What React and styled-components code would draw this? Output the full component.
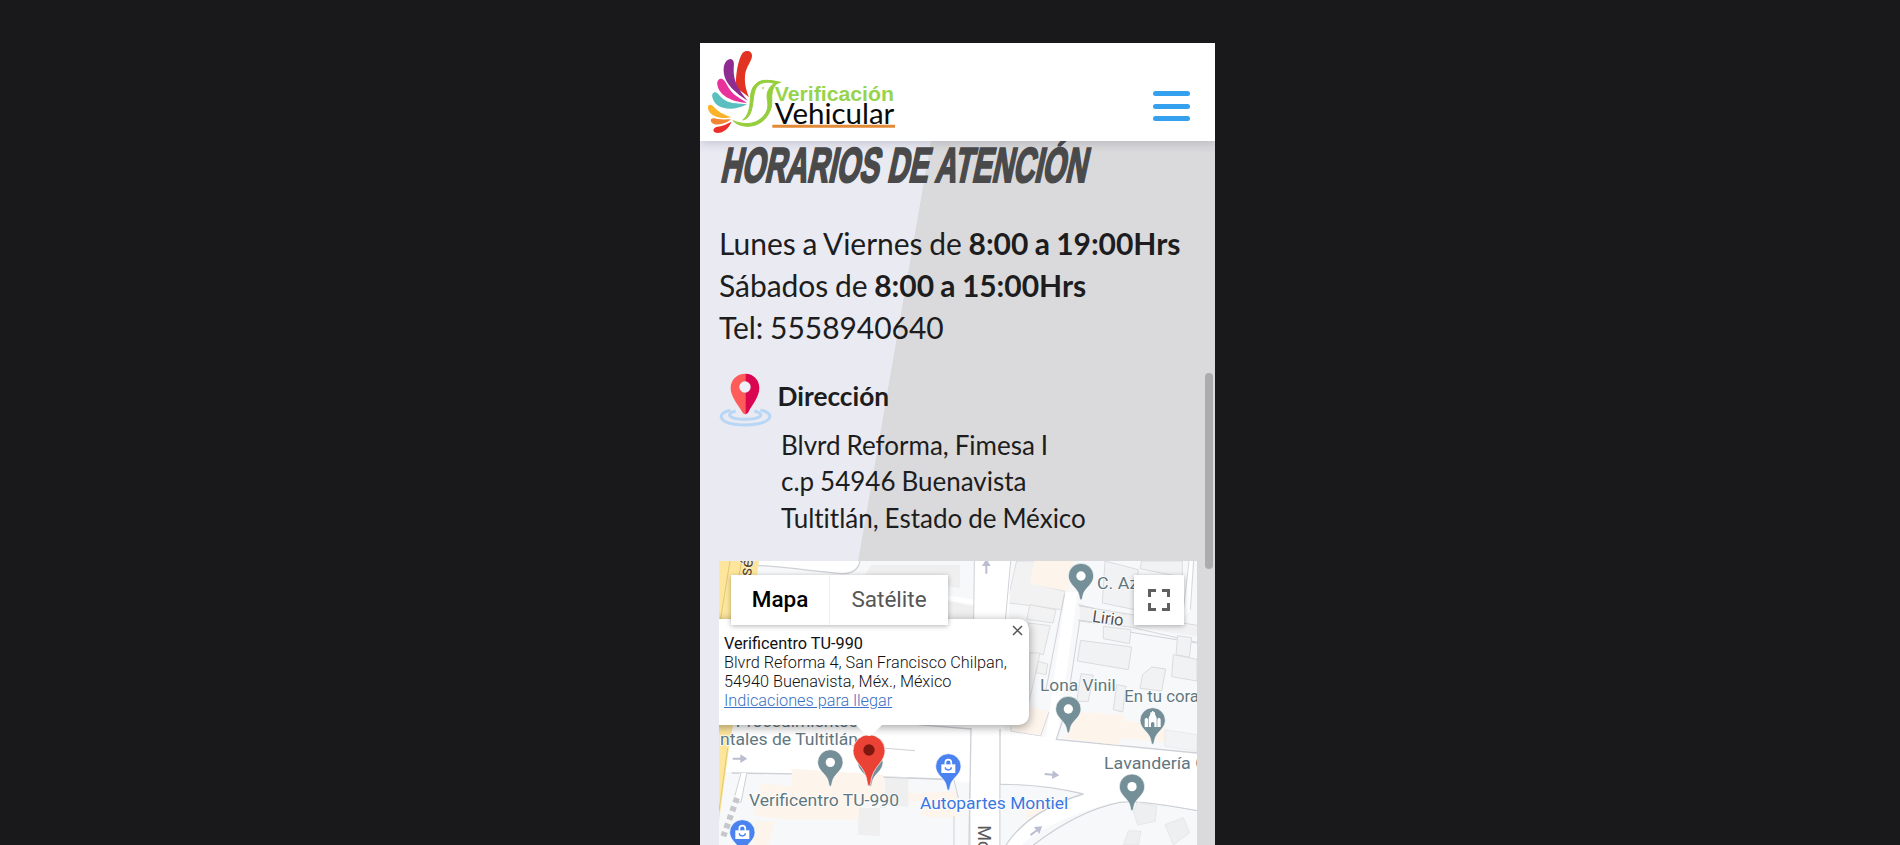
import React from "react";
import styled, { createGlobalStyle } from "styled-components";

const GlobalStyle = createGlobalStyle`
  * { box-sizing: border-box; }
  html, body { margin: 0; height: 845px; overflow: hidden; background: #19191b; }
  body { font-family: Lato, "Liberation Sans", sans-serif; color: #1d1d20; }
`;

const Stage = styled.div`
  display: flex;
  justify-content: center;
  height: 845px;
  padding: 43px 0 0 15px;
  overflow: hidden;
`;

const Phone = styled.div`
  display: flex;
  flex-direction: column;
  width: 515px;
  height: 802px;
  overflow: hidden;
`;

const Header = styled.header`
  display: flex;
  flex: none;
  justify-content: space-between;
  height: 98px;
  padding-right: 25px;
  background: #fff;
  box-shadow: 0 2px 10px rgba(40, 40, 70, 0.2);
  z-index: 3;
`;

const MenuButton = styled.button`
  display: flex;
  flex-direction: column;
  gap: 7.5px;
  width: 37px;
  margin-top: 48px;
  padding: 0;
  border: 0;
  background: none;
`;

const MenuBar = styled.span`
  height: 5px;
  border-radius: 2.5px;
  background: #35a0ee;
`;

const Content = styled.main`
  display: flex;
  flex: 1;
  min-height: 0;
  justify-content: space-between;
  padding-left: 19px;
  background: linear-gradient(99.84deg, #e9eaf2 calc(50% - 86.6px), #dadadc calc(50% - 86px));
`;

const Column = styled.div`
  width: 478px;
  flex: none;
`;

const Title = styled.h2`
  width: max-content;
  height: 50px;
  margin: 0 0 0 1px;
  font: 700 49px/50px "Liberation Sans Narrow", "Liberation Sans", sans-serif;
  color: #4a4a4b;
  white-space: nowrap;
  -webkit-text-stroke: 2.2px #4a4a4b;
  transform-origin: 0 41px;
  transform: translateY(-1.5px) skewX(-12deg) scaleX(${(p) => p.$squeeze});
`;

const Hours = styled.div`
  margin-top: 31px;
  font-size: 30px;
  line-height: 42px;
  letter-spacing: -0.04px;
  word-spacing: -0.9px;
  white-space: nowrap;
`;

const Strong = styled.strong`
  font-weight: 700;
`;

const Place = styled.div`
  display: flex;
  align-items: flex-start;
  gap: 5.5px;
  height: 54px;
  margin-top: 25.3px;
`;

const PlaceTitle = styled.h3`
  margin: 5px 0 0;
  font-size: 26.3px;
  line-height: 36px;
  font-weight: 700;
`;

const Address = styled.address`
  margin: -0.3px 0 0 62px;
  font-size: 26px;
  line-height: 36.4px;
  font-style: normal;
  font-variant-ligatures: none;
  word-spacing: -0.7px;
  white-space: nowrap;
`;

const MapBox = styled.section`
  position: relative;
  width: 478px;
  height: 284px;
  margin-top: 24.8px;
  overflow: hidden;
  font-family: Roboto, sans-serif;
`;

const MapSvg = styled.svg`
  display: block;
  width: 478px;
  height: 284px;
`;

const InfoWindow = styled.div`
  position: absolute;
  left: -30px;
  top: 58px;
  width: 340px;
  height: 106px;
  padding: 14.5px 0 0 35px;
  border-radius: 10px;
  background: #fff;
  box-shadow: 0 2px 9px 1px rgba(0, 0, 0, 0.32);
  font-size: 16.25px;
  line-height: 19px;
  font-weight: 300;
  color: #111;
  white-space: nowrap;
`;

const InfoTitle = styled.div`
  font-weight: 400;
`;

const InfoLink = styled.a`
  color: #3a6fc4;
  text-decoration: underline;
`;

const CloseIcon = styled.svg`
  position: absolute;
  right: 6px;
  top: 6px;
  width: 11px;
  height: 11px;
`;

const Tail = styled.svg`
  position: absolute;
  left: 134px;
  top: 163px;
  width: 32px;
  height: 13px;
`;

const TypeSwitch = styled.div`
  position: absolute;
  left: 12px;
  top: 13.5px;
  display: flex;
  gap: 1px;
  height: 50px;
  background: #eee;
  box-shadow: 0 1px 5px rgba(0, 0, 0, 0.3);
`;

const TypeButton = styled.button`
  width: ${(p) => p.$width}px;
  padding: 0 0 2px;
  border: 0;
  background: #fff;
  font: ${(p) => (p.$active ? 500 : 400)} 22.5px Roboto, sans-serif;
  color: ${(p) => (p.$active ? "#000" : "#565656")};
`;

const FullscreenButton = styled.button`
  position: absolute;
  right: 13px;
  top: 13.5px;
  display: grid;
  place-items: center;
  width: 50px;
  height: 50px;
  padding: 0;
  border: 0;
  background: #fff;
  box-shadow: 0 1px 5px rgba(0, 0, 0, 0.3);
`;

const ScrollThumb = styled.div`
  width: 8px;
  height: 196px;
  margin: 231.5px 2px 0 0;
  border-radius: 4px;
  background: #acacaf;
`;

function Logo() {
  return (
    <svg width="200" height="98" viewBox="30 24 600 294">
      <path fill="#e23222" d="M138 160C136 108 149 62 160 52C171 43 188 49 186 64C184 82 168 94 165 122C163 148 170 170 177 187C165 178 149 165 138 160Z" />
      <path fill="#8e2c91" d="M166 193C132 168 99 142 101 101C102 84 111 72 122 72C134 74 132 88 131 101C130 140 146 164 173 197Z" />
      <path fill="#e8319b" d="M171 204C136 201 88 187 82 149C80 136 89 128 98 133C108 139 111 153 121 166C134 184 154 192 171 204Z" />
      <path fill="#5bbfc0" d="M171 208C133 229 79 227 68 190C63 175 72 168 82 174C98 193 111 203 137 205Z" />
      <path fill="#fbb42a" d="M124 247C95 254 59 244 54 221C52 208 61 206 70 214C84 231 101 239 124 247Z" />
      <path fill="#f28532" d="M123 253C105 270 72 274 63 260C60 250 68 248 78 251C93 254 107 253 123 253Z" />
      <path fill="#ec3029" d="M124 260C118 282 91 300 74 292C66 285 72 277 83 275C100 273 113 266 124 260Z" />
      <path fill="#95ce3c" stroke="#95ce3c" strokeWidth="3" strokeLinejoin="round" d="M158 255C174 244 180 220 181 193C181 152 204 134 231 136C249 136 259 140 272 142C259 145 251 152 247 170C242 188 249 201 242 222C230 261 191 282 153 271C143 268 135 264 130 257C150 266 182 271 204 257C232 239 237 218 232 194C228 172 238 153 254 146C241 140 219 139 204 151C188 168 192 198 185 222C181 241 171 253 158 255Z" />
      <circle cx="219" cy="159" r="4" fill="#c5e494" />
      <text x="254" y="199" textLength="358" lengthAdjust="spacingAndGlyphs" fontFamily="Liberation Sans, sans-serif" fontWeight="700" fontSize="61" fill="#96d44e">Verificación</text>
      <text x="254" y="266" textLength="359" lengthAdjust="spacingAndGlyphs" fontFamily="Lato, sans-serif" fontWeight="400" fontSize="84" fill="#090909">Vehicular</text>
      <path fill="#e28a38" d="M247 269H615V278H247Z" />
    </svg>
  );
}

function PlaceIcon() {
  return (
    <svg width="53" height="54" viewBox="27 27 159 162">
      <g fill="none" stroke="#b8d6f5">
        <path strokeWidth="9" d="M62 139C17 147 22 181 104 183C190 181 198 148 151 138" />
        <path strokeWidth="9" d="M77 141C42 151 60 166 105 166C151 166 170 151 133 141" />
      </g>
      <path fill="#ff5b58" d="M106 29C80 29 62 48 62 72C62 100 87 125 97 145Q101 151 106 151Z" />
      <path fill="#db0650" d="M106 29C131 29 148 48 148 72C148 100 124 125 115 145Q111 151 106 151Z" />
      <circle cx="105" cy="69" r="17" fill="#eef0f8" />
    </svg>
  );
}

function Pin({ x, y, color = "#748f98", children }) {
  return (
    <g transform={`translate(${x} ${y})`}>
      <path fill={color} stroke="#fff" strokeWidth="2" d="M0 72C-5 72-4 60-9 49C-17 33-38 22-38 0A38 38 0 0 1 38 0C38 22 17 33 9 49C4 60 5 72 0 72Z" />
      {children || <circle r="14" fill="#fff" />}
    </g>
  );
}

function Bag() {
  return (
    <g>
      <path fill="#fff" d="M-21-6H21V20H-21Z" />
      <path fill="none" stroke="#fff" strokeWidth="5" d="M-9-5V-11A9 9 0 0 1 9-11V-5" />
      <path fill="none" stroke="#4a83f0" strokeWidth="4" d="M-9 3A9 8 0 0 0 9 3" />
    </g>
  );
}

function Label({ x, y, w, color = "#5f7780", children, ...rest }) {
  return (
    <text x={x} y={y} textLength={w} lengthAdjust="spacingAndGlyphs" fontSize="50" fill={color} stroke="#fff" strokeWidth="4" strokeLinejoin="round" paintOrder="stroke" {...rest}>
      {children}
    </text>
  );
}

const Arrow = ({ x, y, r = 0 }) => (
  <path transform={`translate(${x} ${y}) rotate(${r})`} fill="#bbbdd0" d="M-22-3H1V-13L22 0L1 13V3H-22Z" />
);

function StreetMap() {
  return (
    <MapSvg viewBox="12 9 1434 852" fontFamily="Roboto, sans-serif">
      <rect x="0" y="0" width="1470" height="870" fill="#f7f8fa" />
      <path fill="#fff" d="M120 0H445C430 35 410 48 380 46C300 40 220 28 125 24Z" />
      <path fill="none" stroke="#cfd1d6" strokeWidth="4" d="M125 22C220 28 300 40 370 46C410 50 430 35 435 9" />
      <path fill="#efeff0" d="M470 20H735V90L450 50ZM700 130L775 145V185H700Z" />
      <path fill="#fff" d="M698 112L780 125V140L698 126Z" />

      <g fill="#f2f2f3" stroke="#dddee1" strokeWidth="3">
        <path d="M905 9H968V80L1050 100L1040 155L876 134Z" />
        <path d="M945 140L1023 155L1014 195L935 184Z" />
        <path d="M940 195L1006 203L985 290L940 282Z" />
        <path d="M945 285H975L952 390L925 500H940Z" />
        <path d="M970 310L998 318L993 350L963 344Z" />
      </g>
      <path fill="#fdf4ec" d="M958 9H1078L1060 100L945 78ZM910 440L1002 460L980 531L886 520Z" />
      <path fill="none" stroke="#d6d8dd" strokeWidth="3" d="M888 505V520L977 534L1002 462" />

      <path fill="#fff" d="M780 9H888L866 560H768ZM1052 102H1088L1026 545H992Z" />
      <path fill="none" stroke="#d0d2d7" strokeWidth="3" d="M778 9L768 870M887 9L870 200M1048 110L992 400M1094 190L1062 400M1090 140L1140 152M1220 168L1270 180M1090 188L1140 195M1230 220L1446 255" />
      <path fill="#f1f1f3" d="M1095 147L1446 205V235L1095 185Z" />
      <path fill="none" stroke="#d5d7db" strokeWidth="3" d="M1092 144L1446 202M1090 186L1250 208L1446 253" />
      <g fill="#f1f2f3" stroke="#dadcdf" strokeWidth="3">
        <path d="M1170 9L1270 35L1260 155L1162 135Z" />
        <path d="M1280 9H1402V58L1275 32Z" />
        <path d="M1165 205L1248 215L1243 257L1165 242Z" />
        <path d="M1097 247L1250 267L1240 335L1087 309Z" />
        <path d="M1388 233L1430 239L1423 298L1383 290Z" />
        <path d="M1375 290L1446 304V369L1370 356Z" />
        <path d="M1275 391L1283 350L1310 327L1352 333L1340 399Z" />
        <path d="M1098 347L1135 352L1120 430H1085Z" />
        <path d="M1205 380L1233 385L1223 462L1195 455Z" />
      </g>
      <path fill="#fff" d="M1420 9H1432L1426 160L1403 180Z" />
      <path fill="none" stroke="#d5d7da" strokeWidth="3" d="M1422 9L1403 175M1436 9L1426 155" />

      <path fill="#fff" d="M12 502H770L1026 544L1446 583V756C1380 746 1250 720 1170 740C1050 775 960 820 910 870H855V678L12 640Z" />
      <path fill="#fff" d="M768 500H855V870H768Z" />
      <path fill="none" stroke="#cfd1d7" strokeWidth="4" d="M610 500L768 513M1057 445L1024 544L1446 585M50 645L250 648L717 664M855 513V861M768 510L762 861M857 679Q985 680 1105 708" />
      <path fill="#f7f8fa" d="M857 681Q985 681 1103 710Q940 760 873 861H857Z" />
      <path fill="#fdf4ec" d="M935 730L1045 724Q985 755 935 792ZM1080 460L1230 472L1215 562L1050 542ZM1230 488L1350 500V553L1215 540Z" />
      <path fill="#f2f3f4" stroke="#e4e5e7" strokeWidth="2" d="M1350 515L1446 530V580L1350 565Z" />
      <path fill="none" stroke="#cdd0d5" strokeWidth="4" d="M1105 708Q940 758 873 861M955 861Q1090 758 1215 733Q1270 725 1446 758" />
      <path fill="#f7f8fa" d="M957 864Q1090 762 1215 736Q1270 728 1446 761V864Z" />
      <g fill="#eeeff0" stroke="#e0e1e3" strokeWidth="2">
        <path d="M1268 732L1325 745L1321 790L1268 801L1255 760Z" />
        <path d="M1350 800L1405 779L1424 824L1375 861Z" />
        <path d="M1240 818L1278 820L1270 861H1225Z" />
      </g>

      <path fill="#f7f8fa" d="M90 650L710 666L720 864H12V720Z" />
      <path fill="#fff" d="M75 645H95L75 735L60 705Z" />
      <path fill="#fdf4ec" d="M230 632L505 650V705H620L725 700V780L617 775V730H440V785H215V785L115 773L140 675L230 685ZM120 790H180L160 861H115Z" />
      <path fill="#efeff0" d="M510 655L580 658V746L495 742V835L428 830L432 750H510Z" />
      <path fill="none" stroke="#cfd1d6" strokeWidth="3" d="M78 645L60 712M95 647L78 733L60 728M380 560L600 578M510 658L717 666L730 720M717 775V861" />
      <g stroke="#c6c7ca" strokeWidth="18" strokeDasharray="15 12"><path d="M66 720L25 835" /></g>

      <path fill="#fde69c" d="M12 9H132L98 250L42 570L12 790Z" />
      <path fill="none" stroke="#e3c774" strokeWidth="3" d="M45 9L14 200M80 9L42 220M38 570L12 760" />

      <text transform="translate(108 56) rotate(-83)" fontSize="50" fill="#5d452e" stroke="#fff6dd" strokeWidth="4" paintOrder="stroke">sé</text>
      <Arrow x={814} y={25} r={-90} />
      <Arrow x={75} y={602} />
      <Arrow x={1011} y={650} r={5} />
      <Arrow x={964} y={818} r={-37} />

      <Label x={62} y={507} w={367}>Procedimientos</Label>
      <Label x={15} y={560} w={414}>ntales de Tultitlán</Label>
      <Label x={102} y={745} w={450}>Verificentro TU-990</Label>
      <Label x={615} y={752} w={445} color="#3977e2">Autopartes Montiel</Label>
      <Label x={975} y={400} w={227}>Lona Vinil</Label>
      <Label x={1228} y={433} w={305}>En tu corazón</Label>
      <Label x={1167} y={632} w={310}>Lavandería G</Label>
      <Label x={1146} y={92} w={166}>C. Azul</Label>
      <text transform="translate(1130 191) rotate(8)" textLength="94" lengthAdjust="spacingAndGlyphs" fontSize="50" fill="#4f4f50" stroke="#fff" strokeWidth="5" paintOrder="stroke">Lirio</text>
      <text transform="translate(788 802) rotate(90)" fontSize="54" fill="#59595b" stroke="#fff" strokeWidth="4" paintOrder="stroke">Monte</text>

      <Pin x={346} y={613} />
      <Pin x={466} y={613} />
      <Pin x={1098} y={54} />
      <Pin x={1060} y={453} />
      <Pin x={1251} y={686} />
      <Pin x={1313} y={487}>
        <path fill="#fff" d="M-24 20V-3Q-19-13-14-3V20ZM-12 20V-7L-7-18V-24H-2V-28H2V-24H7V-18L12-7V20H5V8Q0 2-5 8V20ZM14 20V-3Q19-13 24-3V20Z" />
      </Pin>
      <Pin x={700} y={625} color="#4a83f0"><Bag /></Pin>
      <Pin x={82} y={823} color="#4a83f0"><Bag /></Pin>

      <path fill="#ea4335" stroke="#fff" strokeWidth="2" d="M462 684C456 684 458 668 451 650C441 622 414 608 414 578A48 48 0 0 1 510 578C510 608 483 622 473 650C466 668 468 684 462 684Z" />
      <circle cx="462" cy="576" r="17" fill="#7e1710" />
    </MapSvg>
  );
}

export default function App() {
  return (
    <>
      <GlobalStyle />
      <Stage>
        <Phone>
          <Header>
            <Logo />
            <MenuButton aria-label="Menú">
              <MenuBar />
              <MenuBar />
              <MenuBar />
            </MenuButton>
          </Header>
          <Content>
            <Column>
              <Title $squeeze={0.6}>HORARIOS DE ATENCIÓN</Title>
              <Hours>
                <div>Lunes a Viernes de <Strong>8:00 a 19:00Hrs</Strong></div>
                <div>Sábados de <Strong>8:00 a 15:00Hrs</Strong></div>
                <div>Tel: 5558940640</div>
              </Hours>
              <Place>
                <PlaceIcon />
                <PlaceTitle>Dirección</PlaceTitle>
              </Place>
              <Address>
                Blvrd Reforma, Fimesa I<br />
                c.p 54946 Buenavista<br />
                Tultitlán, Estado de México
              </Address>
              <MapBox>
                <StreetMap />
                <InfoWindow>
                  <InfoTitle>Verificentro TU-990</InfoTitle>
                  <div>Blvrd Reforma 4, San Francisco Chilpan,</div>
                  <div>54940 Buenavista, Méx., México</div>
                  <InfoLink>Indicaciones para llegar</InfoLink>
                  <CloseIcon viewBox="0 0 11 11">
                    <path d="M1 1L10 10M10 1L1 10" stroke="#555" strokeWidth="1.5" />
                  </CloseIcon>
                </InfoWindow>
                <Tail viewBox="0 0 32 13">
                  <path fill="#fff" d="M2 0H30L20 10Q16 14 12 10Z" />
                </Tail>
                <TypeSwitch>
                  <TypeButton $active $width={98}>Mapa</TypeButton>
                  <TypeButton $width={118}>Satélite</TypeButton>
                </TypeSwitch>
                <FullscreenButton aria-label="Pantalla completa">
                  <svg width="22" height="22" viewBox="0 0 22 22" fill="none" stroke="#5f5f5f" strokeWidth="3">
                    <path d="M1.5 8V1.5H8M14 1.5H20.5V8M20.5 14V20.5H14M8 20.5H1.5V14" />
                  </svg>
                </FullscreenButton>
              </MapBox>
            </Column>
            <ScrollThumb />
          </Content>
        </Phone>
      </Stage>
    </>
  );
}
